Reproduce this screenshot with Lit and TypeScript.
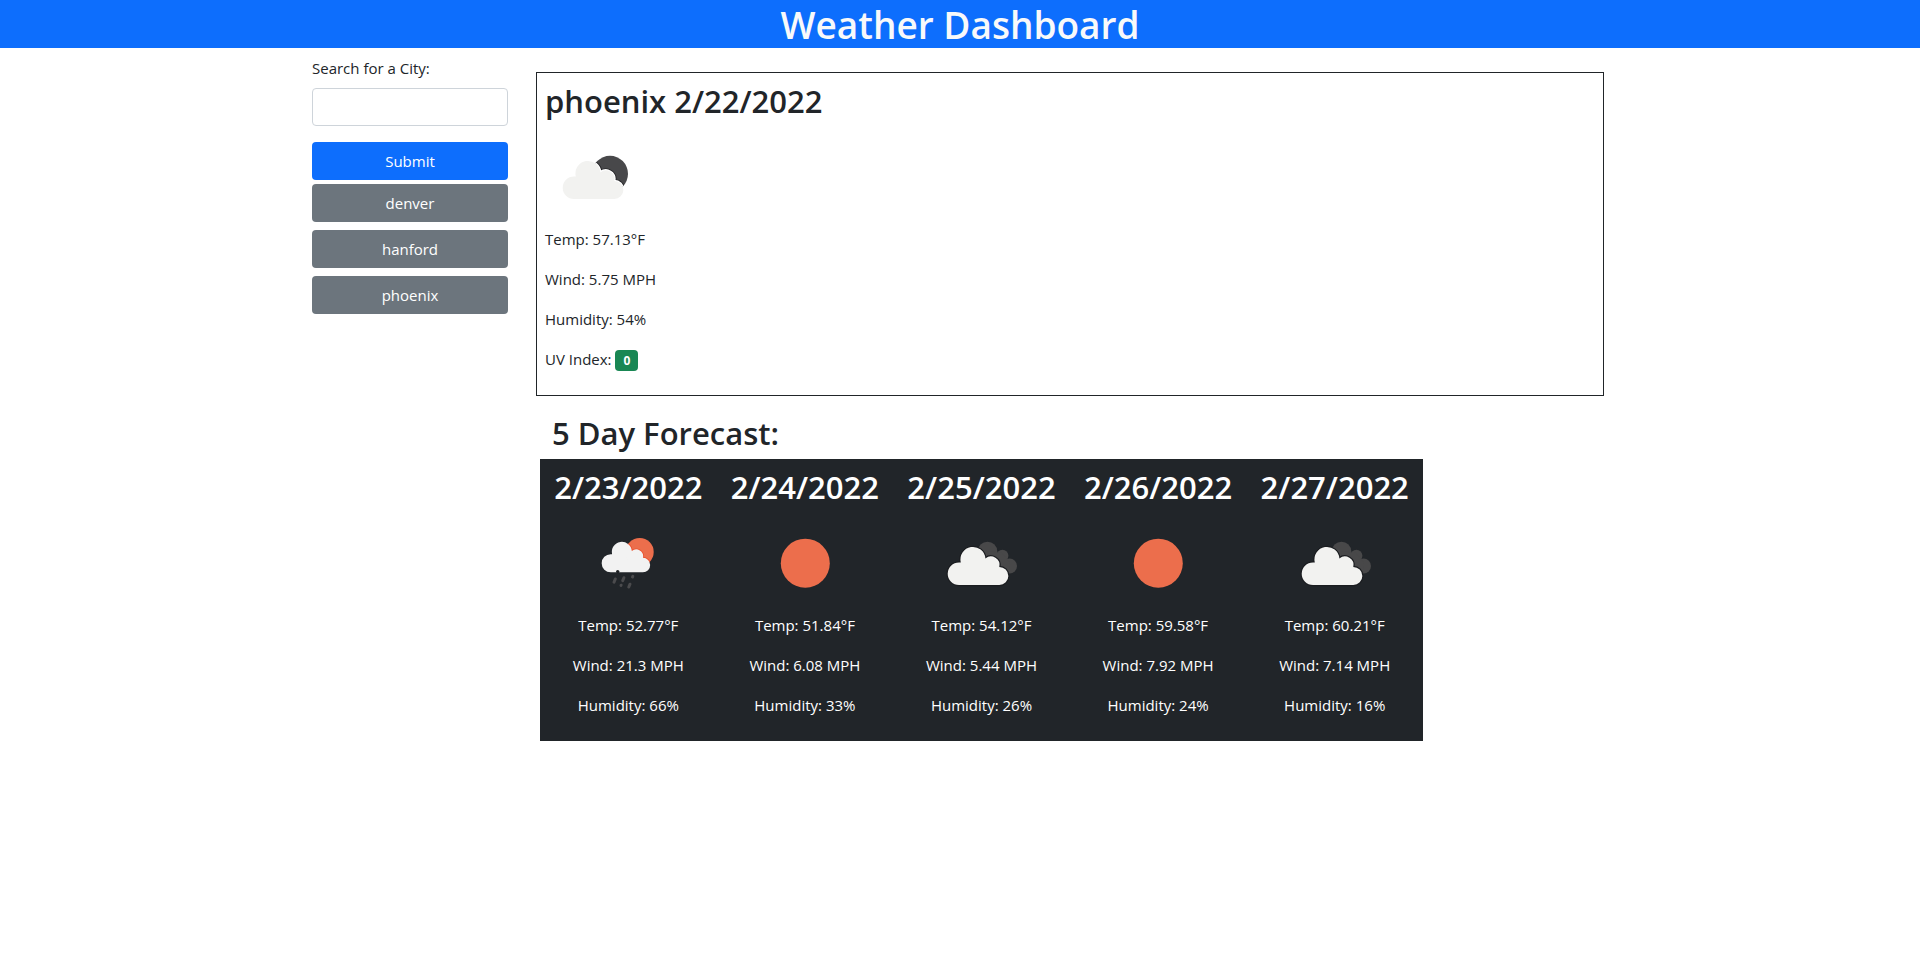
import { LitElement, html, svg, css } from "lit";
import { customElement, property, state } from "lit/decorators.js";

type Sky = "few-clouds-night" | "clear" | "overcast" | "rain";

interface Reading {
  date: string;
  sky: Sky;
  temp: string;
  wind: string;
  humidity: string;
}

const CLOUD =
  "M29 72 A11.3 11.3 0 0 1 29 49.4 L30.8 49.4 A12.5 12.5 0 1 1 55.4 45.4 A8.6 8.6 0 0 1 69.3 53.9 A9.05 9.05 0 0 1 69.3 72 Z";

@customElement("weather-icon")
export class WeatherIcon extends LitElement {
  static styles = css`
    :host {
      display: block;
      width: 100px;
      height: 100px;
    }
    .icon {
      display: block;
      width: 100%;
      height: 100%;
    }
  `;

  @property() sky: Sky = "clear";

  private shapes() {
    switch (this.sky) {
      case "few-clouds-night":
        return svg`
          <clipPath id="disc"><circle cx="65" cy="46.8" r="18" /></clipPath>
          <circle cx="65" cy="46.8" r="18" fill="#48484a" />
          <g clip-path="url(#disc)">
            <path d=${CLOUD} fill="none" stroke="#1d1d1f" stroke-opacity="0.8" stroke-width="4" />
            <path d=${CLOUD} fill="none" stroke="#ffffff" stroke-width="2.2" />
          </g>
          <path d=${CLOUD} fill="#f2f2f0" />`;
      case "overcast":
        return svg`
          <g fill="#484849">
            <circle cx="56.5" cy="38.5" r="9.8" />
            <circle cx="71.4" cy="42.8" r="6" />
            <circle cx="78.6" cy="53" r="7.4" />
            <path d="M56 38 L71 40 L79 50 L78 60 L60 58 Z" />
          </g>
          <g transform="translate(-1 0)">
            <path d=${CLOUD} fill="none" stroke="#1b1d20" stroke-width="2.4" />
            <path d=${CLOUD} fill="#f2f2f0" />
          </g>`;
      case "rain":
        return svg`
          <clipPath id="disc"><circle cx="61.7" cy="39" r="14" /></clipPath>
          <circle cx="61.7" cy="39" r="14" fill="#ec6e4c" />
          <g transform="translate(9.5 1.7) scale(0.8)"><path d=${CLOUD} fill="#f2f2f2" /></g>
          <g clip-path="url(#disc)">
            <g transform="translate(9.5 1.7) scale(0.8)">
              <path d=${CLOUD} fill="#f2f2f2" stroke="#ea4f2c" stroke-width="2" paint-order="stroke" />
            </g>
          </g>
          <circle cx="39.7" cy="58.6" r="1.7" fill="#1d2023" />
          <g fill="none" stroke="#4b4b4d" stroke-width="3" stroke-linecap="round">
            <path d="M37.3 66 L36 69.2" />
            <path d="M45.9 64.7 L44.7 67.6" />
            <path d="M54.8 63.4 L54.5 64" />
            <path d="M43.1 72.2 L43 72.4" />
            <path d="M52 71.2 L50.8 74" />
          </g>`;
      default:
        return svg`<circle cx="50.3" cy="50.2" r="24.5" fill="#ec6e4c" />`;
    }
  }

  render() {
    return html`<svg class="icon" viewBox="0 0 100 100" aria-hidden="true">${this.shapes()}</svg>`;
  }
}

@customElement("app-root")
export class AppRoot extends LitElement {
  static styles = css`
    :host {
      display: block;
      font-family: "Segoe UI", "Open Sans", "Noto Sans", sans-serif;
      font-size: 15px;
      line-height: 24px;
      color: #212529;
    }
    * {
      box-sizing: border-box;
    }
    h1,
    h2,
    p {
      margin: 0;
    }
    .banner {
      padding-top: 2px;
      background: #0d6efd;
      color: #f8f9fa;
      text-align: center;
    }
    .title {
      font-size: 37px;
      line-height: 46px;
      font-weight: 600;
    }
    .layout {
      display: grid;
      grid-template-columns: 1fr 5fr;
      max-width: 1320px;
      margin: 0 auto;
    }
    .sidebar {
      padding: 8px 12px;
    }
    .search,
    .history {
      display: flex;
      flex-direction: column;
    }
    .label {
      margin-bottom: 8px;
    }
    .field {
      width: 100%;
      height: 38px;
      margin-bottom: 16px;
      padding: 6px 12px;
      border: 1px solid #ced4da;
      border-radius: 4px;
      background: #fff;
      font: inherit;
      color: inherit;
    }
    .button {
      height: 38px;
      padding: 0 12px;
      border: 0;
      border-radius: 4px;
      font: inherit;
      color: #fff;
      cursor: pointer;
    }
    .primary {
      background: #0d6efd;
    }
    .secondary {
      background: #6c757d;
    }
    .history {
      gap: 8px;
      margin-top: 4px;
    }
    .main {
      min-width: 0;
      padding: 24px 16px;
    }
    .heading {
      margin-bottom: 6px;
      font-size: 31px;
      line-height: 40px;
      font-weight: 600;
    }
    .today {
      padding: 8px;
      border: 1px solid #212529;
    }
    .line {
      margin-bottom: 16px;
    }
    .badge {
      display: inline-block;
      padding: 4px 8px;
      border-radius: 4px;
      background: #198754;
      color: #fff;
      font-size: 12px;
      line-height: 13px;
      font-weight: 700;
    }
    .outlook {
      padding: 17px 4px 0;
    }
    .outlook-title {
      padding-left: 12px;
    }
    .days {
      display: grid;
      grid-template-columns: repeat(5, 1fr);
      max-width: 883px;
      background: #212529;
      color: #fff;
    }
    .day {
      display: flex;
      flex-direction: column;
      align-items: center;
      padding: 8px 0;
      text-align: center;
    }
  `;

  @state() private cities = ["denver", "hanford", "phoenix"];

  private today: Reading & { city: string; uv: string } = {
    city: "phoenix",
    date: "2/22/2022",
    sky: "few-clouds-night",
    temp: "57.13",
    wind: "5.75",
    humidity: "54",
    uv: "0",
  };

  private forecast: Reading[] = [
    { date: "2/23/2022", sky: "rain", temp: "52.77", wind: "21.3", humidity: "66" },
    { date: "2/24/2022", sky: "clear", temp: "51.84", wind: "6.08", humidity: "33" },
    { date: "2/25/2022", sky: "overcast", temp: "54.12", wind: "5.44", humidity: "26" },
    { date: "2/26/2022", sky: "clear", temp: "59.58", wind: "7.92", humidity: "24" },
    { date: "2/27/2022", sky: "overcast", temp: "60.21", wind: "7.14", humidity: "16" },
  ];

  private addCity(event: Event) {
    event.preventDefault();
    const form = event.target as HTMLFormElement;
    const city = String(new FormData(form).get("city") ?? "").trim();
    if (city && !this.cities.includes(city)) {
      this.cities = [...this.cities, city];
    }
    form.reset();
  }

  private readings(r: Reading) {
    return html`
      <weather-icon .sky=${r.sky}></weather-icon>
      <p class="line">Temp: ${r.temp}°F</p>
      <p class="line">Wind: ${r.wind} MPH</p>
      <p class="line">Humidity: ${r.humidity}%</p>
    `;
  }

  render() {
    return html`
      <header class="banner"><h1 class="title">Weather Dashboard</h1></header>
      <div class="layout">
        <aside class="sidebar">
          <form class="search" @submit=${this.addCity}>
            <label class="label" for="city">Search for a City:</label>
            <input class="field" id="city" name="city" type="text" autocomplete="off" />
            <button class="button primary" type="submit">Submit</button>
          </form>
          <div class="history">
            ${this.cities.map(
              (city) => html`<button class="button secondary" type="button">${city}</button>`
            )}
          </div>
        </aside>
        <main class="main">
          <section class="today">
            <h2 class="heading">${this.today.city} ${this.today.date}</h2>
            ${this.readings(this.today)}
            <p class="line">UV Index: <span class="badge">${this.today.uv}</span></p>
          </section>
          <section class="outlook">
            <h2 class="heading outlook-title">5 Day Forecast:</h2>
            <div class="days">
              ${this.forecast.map(
                (day) => html`
                  <article class="day">
                    <h2 class="heading">${day.date}</h2>
                    ${this.readings(day)}
                  </article>
                `
              )}
            </div>
          </section>
        </main>
      </div>
    `;
  }
}
